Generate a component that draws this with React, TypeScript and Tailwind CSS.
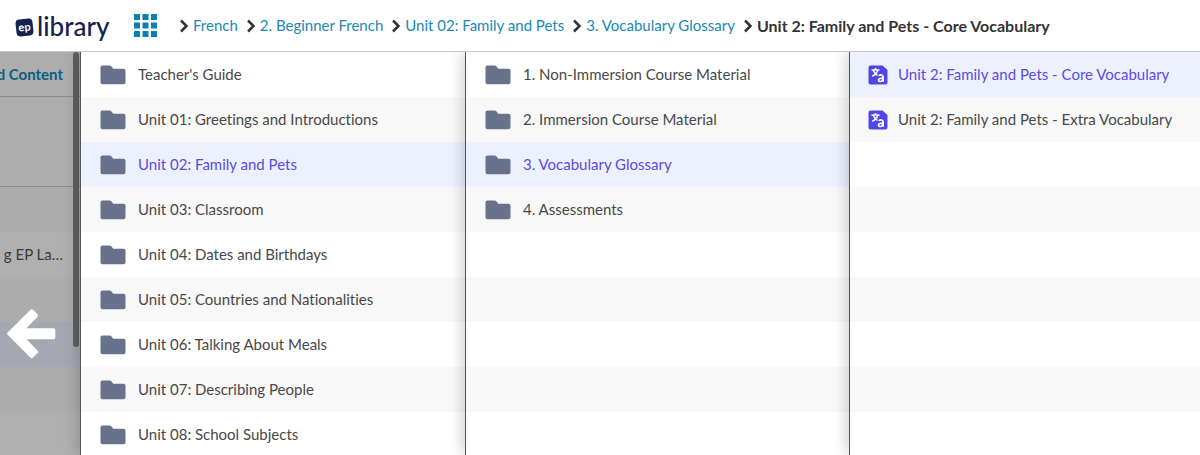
import clsx from 'clsx';

type Item = { label: string; active?: boolean };

// ─── Data ─────────────────────────────────────────────────────────────────────
const CRUMBS = [
  'French',
  '2. Beginner French',
  'Unit 02: Family and Pets',
  '3. Vocabulary Glossary',
];

const UNITS: Item[] = [
  { label: "Teacher's Guide" },
  { label: 'Unit 01: Greetings and Introductions' },
  { label: 'Unit 02: Family and Pets', active: true },
  { label: 'Unit 03: Classroom' },
  { label: 'Unit 04: Dates and Birthdays' },
  { label: 'Unit 05: Countries and Nationalities' },
  { label: 'Unit 06: Talking About Meals' },
  { label: 'Unit 07: Describing People' },
  { label: 'Unit 08: School Subjects' },
];

const SECTIONS: Item[] = [
  { label: '1. Non-Immersion Course Material' },
  { label: '2. Immersion Course Material' },
  { label: '3. Vocabulary Glossary', active: true },
  { label: '4. Assessments' },
];

const GLOSSARIES: Item[] = [
  { label: 'Unit 2: Family and Pets - Core Vocabulary', active: true },
  { label: 'Unit 2: Family and Pets - Extra Vocabulary' },
];

// ─── Icons ────────────────────────────────────────────────────────────────────
function FolderIcon() {
  return (
    <svg viewBox="0 0 26 20" className="h-5 w-[26px] shrink-0" fill="#69728d" aria-hidden="true">
      <path d="M2.5 0.5h7.2c.6 0 1 .2 1.4.6l2.2 2.6h10.2c1.1 0 2 .9 2 2v11.5c0 1.1-.9 2-2 2h-21c-1.100 0-2-.9-2-2V2.500c0-1.100.9-2 2-2z" />
    </svg>
  );
}

function GlossaryIcon() {
  return (
    <svg viewBox="0 0 20 20" className="size-5 shrink-0" fill="none" aria-hidden="true">
      <path d="M2.500 .5h12L19.500 5v12.500a2 2 0 0 1-2 2h-15a2 2 0 0 1-2-2v-15a2 2 0 0 1 2-2z" fill="#4f46e5" />
      <path d="M3.500 5h8M7.500 3v2M9.800 5.200c-.8 2.700-2.800 4.700-5.500 6M5.300 5.500c.9 2.200 2.200 3.600 4.200 5" stroke="#fff" strokeWidth="1.500" />
      <path d="M10.700 10.600c1.800-1.200 4.400-.9 4.400 1.200v4.900M15.100 13.200c-2.600-.1-4.600.3-4.600 1.900 0 2 3.800 1.900 4.600-.5" stroke="#fff" strokeWidth="1.700" />
    </svg>
  );
}

function Chevron() {
  return (
    <svg viewBox="0 0 10 14" className="h-3.5 w-2.5 shrink-0" fill="none" stroke="#333" strokeWidth="2.500" aria-hidden="true">
      <path d="M2 1.500 7.500 7 2 12.500" />
    </svg>
  );
}

function GridIcon() {
  return (
    <svg viewBox="0 0 23 23" className="size-[23px]" fill="#0880b2" aria-hidden="true">
      {[0, 8.5, 17].map((y) =>
        [0, 8.5, 17].map((x) => <rect key={`${x}-${y}`} x={x} y={y} width="6" height="6" />),
      )}
    </svg>
  );
}

function BackArrow() {
  return (
    <svg viewBox="0 0 49 50" className="h-[50px] w-[49px]" fill="#fff" stroke="#fff" strokeWidth="4" strokeLinejoin="round" aria-hidden="true">
      <path d="M2.300 24.700 24.700 2.300 29 6.500 14.700 21.200H46.300V28.200H14.700L29 42.900 24.700 47.100z" />
    </svg>
  );
}

// ─── Column ───────────────────────────────────────────────────────────────────
function Column({ label, items, kind, className }: {
  label: string;
  items: Item[];
  kind: 'folder' | 'glossary';
  className: string;
}) {
  return (
    <nav
      aria-label={label}
      className={clsx(
        'relative overflow-hidden border-l border-[#555] shadow-[-2px_0_14px_rgba(0,0,0,0.2)]',
        'bg-[repeating-linear-gradient(#fff_0_45px,#f8f8f8_45px_90px)]',
        className,
      )}
    >
      <ul>
        {items.map(({ label: text, active }) => (
          <li key={text}>
            <a
              href="#"
              className={clsx(
                'flex h-[45px] items-center whitespace-nowrap text-[15px]',
                kind === 'folder' ? 'gap-3 pl-[19px]' : 'gap-2.5 pl-[18px]',
                active ? 'bg-[#edf1fe] text-[#5a4be3]' : 'text-[#484848]',
              )}
            >
              {kind === 'folder' ? <FolderIcon /> : <GlossaryIcon />}
              {text}
            </a>
          </li>
        ))}
      </ul>
    </nav>
  );
}

// ─── Page ─────────────────────────────────────────────────────────────────────
export default function App() {
  return (
    <div className="flex h-screen flex-col overflow-hidden bg-white font-['Lato','Noto_Sans',sans-serif] [font-variant-ligatures:none]">
      <header className="relative z-10 flex h-[52px] shrink-0 items-center border-b border-[#c8c8c8] bg-white">
        <a href="#" className="flex w-[118px] shrink-0 items-center gap-1 pl-4 text-[#16214f]">
          <span className="mt-1 flex size-[17px] -rotate-6 items-center justify-center rounded-[4px] bg-[#16214f] pb-0.5 text-[11px] leading-none font-bold text-white">
            ep
          </span>
          <span className="text-[26px] leading-8 font-medium">library</span>
        </a>
        <button type="button" aria-label="Browse library" className="ml-4 shrink-0">
          <GridIcon />
        </button>
        <nav aria-label="Breadcrumb" className="ml-[22px]">
          <ol className="flex items-center gap-2 whitespace-nowrap text-[15px]">
            {CRUMBS.map((crumb) => (
              <li key={crumb} className="flex items-center gap-1">
                <Chevron />
                <a href="#" className="text-[#2088b8]">{crumb}</a>
              </li>
            ))}
            <li className="flex items-center gap-1 text-base font-bold text-[#333]" aria-current="page">
              <Chevron />
              Unit 2: Family and Pets - Core Vocabulary
            </li>
          </ol>
        </nav>
      </header>

      <main className="flex min-h-0 flex-1">
        {/* Previous level, dimmed behind the open columns */}
        <aside className="relative w-20 shrink-0 overflow-hidden bg-[#b0b0b0] text-[15px] whitespace-nowrap">
          <div className="flex h-[45px] items-center justify-end border-b border-[#8c8c8c] bg-[#adadad] pr-[17px] font-bold text-[#0a5f85]">
            d Content
          </div>
          <div className="h-[90px] border-b border-[#8c8c8c] bg-[#adadad]" />
          <div className="h-[45px] bg-[#acacac]" />
          <div className="flex h-[45px] items-center justify-end pr-[17px] text-[#3a3a3a]">g EP La…</div>
          <div className="h-[45px] bg-[#acacac]" />
          <div className="h-[45px] bg-[#a5a8b3]" />
          <div className="h-[45px] bg-[#acacac]" />
          <div className="h-[45px]" />
          <div className="absolute top-0 right-px h-[295px] w-1.5 rounded-full bg-[#606060]" />
          <button type="button" aria-label="Back" className="absolute top-[257px] left-[7px]">
            <BackArrow />
          </button>
        </aside>

        <Column label="Units" items={UNITS} kind="folder" className="w-[385px] shrink-0" />
        <Column label="Sections" items={SECTIONS} kind="folder" className="w-96 shrink-0" />
        <Column label="Glossaries" items={GLOSSARIES} kind="glossary" className="min-w-0 flex-1" />
      </main>
    </div>
  );
}
